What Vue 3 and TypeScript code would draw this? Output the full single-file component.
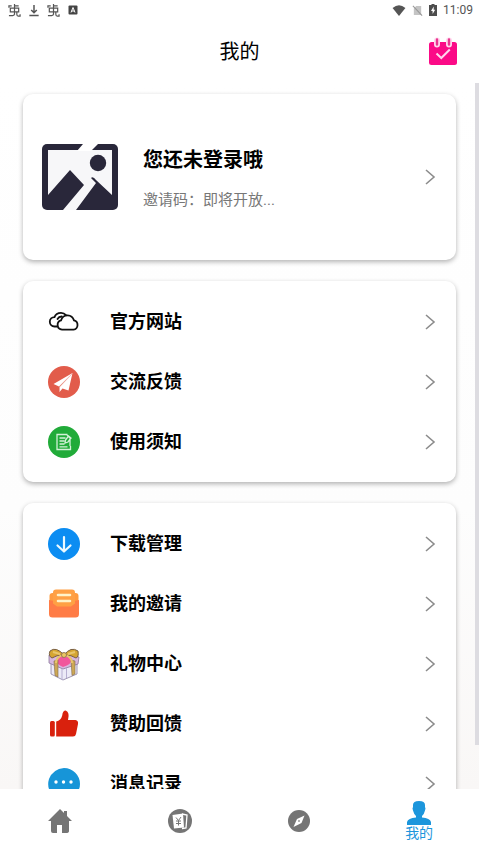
<script setup lang="ts">
import { ref } from 'vue'

interface MenuItem {
  icon: string
  label: string
}

const groups: MenuItem[][] = [
  [
    { icon: 'cloud', label: '官方网站' },
    { icon: 'plane', label: '交流反馈' },
    { icon: 'notice', label: '使用须知' },
  ],
  [
    { icon: 'download', label: '下载管理' },
    { icon: 'invite', label: '我的邀请' },
    { icon: 'gift', label: '礼物中心' },
    { icon: 'thumb', label: '赞助回馈' },
    { icon: 'message', label: '消息记录' },
  ],
]

const tabs = ['home', 'wallet', 'explore', 'mine']
const active = ref('mine')
</script>

<template>
  <div class="screen">
    <div class="status">
      <div class="status-side left">
        <svg v-for="n in 2" :key="n" class="bug" :class="'bug-' + n" viewBox="0 0 14 14">
          <path d="M2.500 4.500h9v4h-9zM7 0v11.500M7 2h4.500M1 4V2h3M1 12.500h4q2 0 2-2M9.500 9v2q0 2 1.500 2h2v-2" />
        </svg>
        <svg class="arrow" viewBox="0 0 10 14"><path d="M5 1v8M2 6.500l3 3 3-3M0 12.500h10" /></svg>
        <svg class="badge-a" viewBox="0 0 10 10"><rect x="0.500" y="0.500" width="9" height="9" rx="1" /><path d="M3 7.500L5 2.500l2 5M3.700 6h2.600" /></svg>
      </div>
      <div class="status-side">
        <svg class="wifi" viewBox="0 0 14 12"><path d="M0 3.200Q7-2.400 14 3.200L7 12z" fill="#555" /></svg>
        <svg class="sim" viewBox="0 0 12 12"><path d="M4.500 1H10v10H2V4z" fill="#c4c4c4" /><path d="M1 1l10 10.500" stroke="#999" stroke-width="1.200" /></svg>
        <svg class="battery" viewBox="0 0 8 12"><path d="M2.500 0h3v1H8v11H0V1h2.500z" fill="#4d4d4d" /><path d="M4.700 2.500L2 7h1.600v3L6.200 5.700H4.700z" fill="#fff" /></svg>
        <span class="time">11:09</span>
      </div>
    </div>

    <header class="header">
      <h1>我的</h1>
      <button class="checkin" aria-label="签到">
        <svg viewBox="0 0 28 28">
          <rect x="0" y="4" width="28" height="23" rx="2.500" fill="#fb0a87" />
          <path d="M8 2.500v4M20 2.500v4" stroke="#ffd5ec" stroke-width="6" stroke-linecap="round" />
          <path d="M8 1.500v5M20 1.500v5" stroke="#e9358f" stroke-width="2.400" stroke-linecap="round" />
          <path d="M7.500 15.500l4.800 4.500 8.500-8.500" fill="none" stroke="#ffd5ec" stroke-width="2" />
        </svg>
      </button>
    </header>

    <main class="content">
      <a class="card profile" href="#login">
        <svg class="avatar" viewBox="0 0 76 66">
          <rect width="76" height="66" rx="5" fill="#29273a" />
          <path d="M6 6h64v45L54 36q-3-4-5-2l5 5-20 27H21l21-25-14-15L6 51z" fill="#f7f7f9" />
          <path d="M41 0h15l-7 7H35z" fill="#fff" />
          <circle cx="56" cy="19" r="8.200" fill="#29273a" />
        </svg>
        <div class="profile-text">
          <strong>您还未登录哦</strong>
          <span>邀请码：即将开放...</span>
        </div>
        <svg class="chevron" viewBox="0 0 10 16"><path d="M1 1l8 7-8 7" /></svg>
      </a>

      <section v-for="(group, index) in groups" :key="index" class="card menu">
        <a v-for="item in group" :key="item.label" class="row" href="#">
          <svg class="icon" viewBox="0 0 32 32">
            <g v-if="item.icon === 'cloud'" fill="none" stroke="#111" stroke-width="1.800" stroke-linejoin="round" stroke-linecap="round">
              <path d="M9 20.500H6.500a4.700 4.700 0 0 1 0-9.400Q8 6.800 13 6.800q3 0 5 2.400" />
              <path d="M14 23.600h11.500a4.700 4.700 0 0 0 .5-9.200q-1.600-4.900-6.300-5-5.200 0-6.700 5A4.700 4.700 0 0 0 14 23.600z" fill="#fff" />
              <path d="M9.500 13q1.300-2.300 4.300-2.500" />
            </g>
            <g v-else-if="item.icon === 'plane'">
              <circle cx="16" cy="16" r="16" fill="#e25c4b" />
              <path d="M24.500 7L5.500 18l5.500 2.500zM24.500 7L11.500 21v5l3-3.500 6 2z" fill="#fff" />
              <path d="M24 8L11.500 21v4" fill="none" stroke="#e9a299" stroke-width=".6" />
            </g>
            <g v-else-if="item.icon === 'notice'">
              <circle cx="16" cy="16" r="16" fill="#21ab39" />
              <path d="M19.500 8.500H9v15h13.500V20M11.500 12h6M11.500 15h5M11.500 18h5M11.500 20.800h8M19 9l3 3M17 17l.5-3 3-4 2.500 2-3 4zM22 14v6" fill="none" stroke="#d3f1d7" stroke-width="1.300" />
            </g>
            <g v-else-if="item.icon === 'download'">
              <circle cx="16" cy="16" r="16" fill="#0c8df2" />
              <path d="M16 9v14M9.500 17.500L16 23.500l6.500-6" fill="none" stroke="#edfaff" stroke-width="2.200" stroke-linecap="round" stroke-linejoin="round" />
            </g>
            <g v-else-if="item.icon === 'invite'">
              <rect x="1.500" y="5" width="29" height="18" rx="3" fill="#ff9b3f" />
              <path d="M1 12l5 1 4 4h12l4-4 5-1v14q0 3.500-3.500 3.500h-23Q1 29.500 1 26z" fill="#ff7c46" />
              <path d="M5 4.500q0-3 3-3h16q3 0 3 3v11l-4 3H9l-4-3z" fill="#ffa044" />
              <path d="M10 7h12M10 13h12" stroke="#fff3c9" stroke-width="2.600" stroke-linecap="round" />
            </g>
            <g v-else-if="item.icon === 'gift'" stroke-linejoin="round">
              <path d="M3 14h26v12l-14 6L3 26z" fill="#eceaf7" stroke="#8b82a5" stroke-width=".8" />
              <path d="M1 7l14-2 16 4-1 7-15 5L1 15z" fill="#d7b8df" stroke="#8b789d" stroke-width=".8" />
              <path d="M9 11q5-5 7-1 6-4 8 1 0 5-9 8-7-3-6-8z" fill="#f1579c" />
              <path d="M6 13l4-1v17l-3-1.500zM23 12l4 1v13l-3 1.500z" fill="#cda855" stroke="#80684a" stroke-width=".6" />
              <path d="M14 21v11M18.500 20v10" stroke="#b7afd2" stroke-width="1" />
              <path d="M16 7Q8-2 2 3q-2 5 2 7 4-3 12-3zM16 7q7-9 14-4 1 6-2 7-4-3-12-3z" fill="#d5a532" stroke="#795f42" />
              <path d="M15 7Q8 9 8 15M17 7q7 2 7 8M5 4l7 2M27 4l-7 2" fill="none" stroke="#e9c66d" stroke-width="2" />
              <circle cx="16" cy="7" r="2.500" fill="#edc764" stroke="#836846" stroke-width=".8" />
            </g>
            <g v-else-if="item.icon === 'thumb'" fill="#d9210d">
              <rect x="2" y="13" width="4.800" height="15.500" rx="1.500" />
              <path d="M8.200 13.500q4.800-1 6-6 .5-5 3.500-5 4.300 1.500 2.300 9.500h7.500q3 .5 2.500 4l-2 10q-.5 2.500-3 2.500H8.200z" />
            </g>
            <g v-else>
              <path d="M16 0a16 16 0 0 1 16 16q0 4-2 7l3 6-8-1Q16 34 6 28-2 21 1 11 5 1 16 0z" fill="#1795d8" />
              <g fill="#fff"><circle cx="8" cy="14" r="1.700" /><circle cx="15.500" cy="14" r="1.700" /><circle cx="23" cy="14" r="1.700" /></g>
            </g>
          </svg>
          <span class="label">{{ item.label }}</span>
          <svg class="chevron" viewBox="0 0 10 16"><path d="M1 1l8 7-8 7" /></svg>
        </a>
      </section>
      <div class="scrollbar"></div>
    </main>

    <nav class="tabs">
      <button
        v-for="tab in tabs"
        :key="tab"
        class="tab"
        :class="{ active: tab === active }"
        :aria-label="tab"
        @click="active = tab"
      >
        <svg viewBox="0 0 24 24">
          <path v-if="tab === 'home'" d="M12 0L0 12h3v10q0 2 2 2h4v-8h5v8h4q3 0 3-2V12h3l-5-5V2h-3v2z" fill="currentColor" />
          <g v-else-if="tab === 'wallet'">
            <circle cx="12" cy="12" r="12" fill="currentColor" />
            <path d="M14 5l5 1-1 13-4 .5" fill="none" stroke="#fff" stroke-width="1.300" />
            <path d="M4.500 6L15 4.500l1 14L6 19.500z" fill="#fff" />
            <path d="M8 8.500l2.500 3 2.500-3.500M10.500 11.500v5M8 12h5M8 14.500h5" fill="none" stroke="#777" />
          </g>
          <g v-else-if="tab === 'explore'">
            <circle cx="12" cy="12" r="11" fill="currentColor" />
            <path d="M17.500 6.500l-3 7.500-8 4 3.500-8z" fill="#fff" />
            <circle cx="12" cy="12" r="1" fill="#999" />
          </g>
          <path v-else d="M6 4q0-4 6-4t6 4v2q1 1 0 3.500-1 4-3 5.500v1.500q8 .5 9 4.500v3H0v-3q1-4 9-4.500V15q-2-1.500-3-5.500-1-2.500 0-3.500z" fill="currentColor" />
        </svg>
        <span v-if="tab === 'mine'">我的</span>
      </button>
    </nav>
  </div>
</template>

<style>
body {
  margin: 0;
  background: #fff;
}
</style>

<style scoped>
.screen {
  display: flex;
  flex-direction: column;
  height: 100vh;
  overflow: hidden;
  font-family: Roboto, "Noto Sans CJK SC", sans-serif;
  color: #000;
}
svg {
  display: block;
  flex: none;
  overflow: visible;
}
a {
  color: inherit;
  text-decoration: none;
}
button {
  border: 0;
  padding: 0;
  background: none;
  font: inherit;
  cursor: pointer;
}
.status {
  flex: none;
  display: flex;
  justify-content: space-between;
  align-items: center;
  height: 20px;
  padding: 0 6px 0 8px;
}
.status-side {
  display: flex;
  align-items: center;
  gap: 6px;
}
.status-side.left {
  gap: 8px;
}
.bug {
  width: 13px;
  height: 13px;
  fill: none;
  stroke: #555;
  stroke-width: 1.3;
}
.bug-2 {
  order: 2;
}
.arrow {
  order: 1;
  width: 10px;
  height: 13px;
  fill: none;
  stroke: #555;
  stroke-width: 1.6;
}
.badge-a {
  order: 3;
  width: 10px;
  height: 10px;
  fill: #444;
}
.badge-a path {
  fill: none;
  stroke: #fff;
}
.wifi {
  width: 14px;
  height: 11px;
}
.sim {
  width: 11px;
  height: 11px;
}
.battery {
  width: 8px;
  height: 12px;
}
.time {
  font-size: 12px;
  line-height: 20px;
  color: #555;
}
.header {
  flex: none;
  display: grid;
  grid-template-columns: 1fr auto 1fr;
  align-items: center;
  height: 63px;
  padding: 0 22px;
}
h1 {
  grid-column: 2;
  margin: 0;
  font-size: 20px;
  line-height: 30px;
  font-weight: 400;
}
.checkin {
  justify-self: end;
}
.checkin svg {
  width: 28px;
  height: 28px;
}
.content {
  position: relative;
  flex: 1;
  min-height: 0;
  overflow: hidden;
  display: flex;
  flex-direction: column;
  gap: 21px;
  padding: 11px 23px 0;
  background: linear-gradient(#fff, #fdfdfd 60%, #f9f7f6);
}
.card {
  flex: none;
  border-radius: 10px;
  background: #fff;
  box-shadow: 0 2px 5px rgba(0, 0, 0, 0.3);
}
.profile {
  display: flex;
  align-items: center;
  padding: 40px 21px 40px 19px;
}
.avatar {
  width: 76px;
  height: 66px;
}
.profile-text {
  flex: 1;
  display: flex;
  flex-direction: column;
  gap: 14px;
  padding: 11px 0 9px 25px;
}
.profile-text strong {
  font-size: 20px;
  line-height: 30px;
}
.profile-text span {
  font-size: 15px;
  line-height: 22px;
  color: #777;
}
.chevron {
  width: 10px;
  height: 16px;
  fill: none;
  stroke: #8c8c8c;
  stroke-width: 1.6;
}
.menu {
  padding: 11px 21px 10px 25px;
}
.row {
  display: flex;
  align-items: center;
  height: 60px;
}
.icon {
  width: 32px;
  height: 32px;
}
.label {
  flex: 1;
  padding-left: 30px;
  font-size: 18px;
  line-height: 28px;
  font-weight: 700;
}
.scrollbar {
  position: absolute;
  top: 0;
  right: 0;
  bottom: 44px;
  width: 4px;
  background: #dddce1;
}
.tabs {
  flex: none;
  display: grid;
  grid-template-columns: repeat(4, 1fr);
  height: 64px;
  background: #fff;
}
.tab {
  display: flex;
  flex-direction: column;
  align-items: center;
  justify-content: center;
  color: #757575;
}
.tab svg {
  width: 24px;
  height: 24px;
}
.tab.active {
  color: #1c96dc;
}
.tab span {
  font-size: 14px;
  line-height: 16px;
}
</style>
